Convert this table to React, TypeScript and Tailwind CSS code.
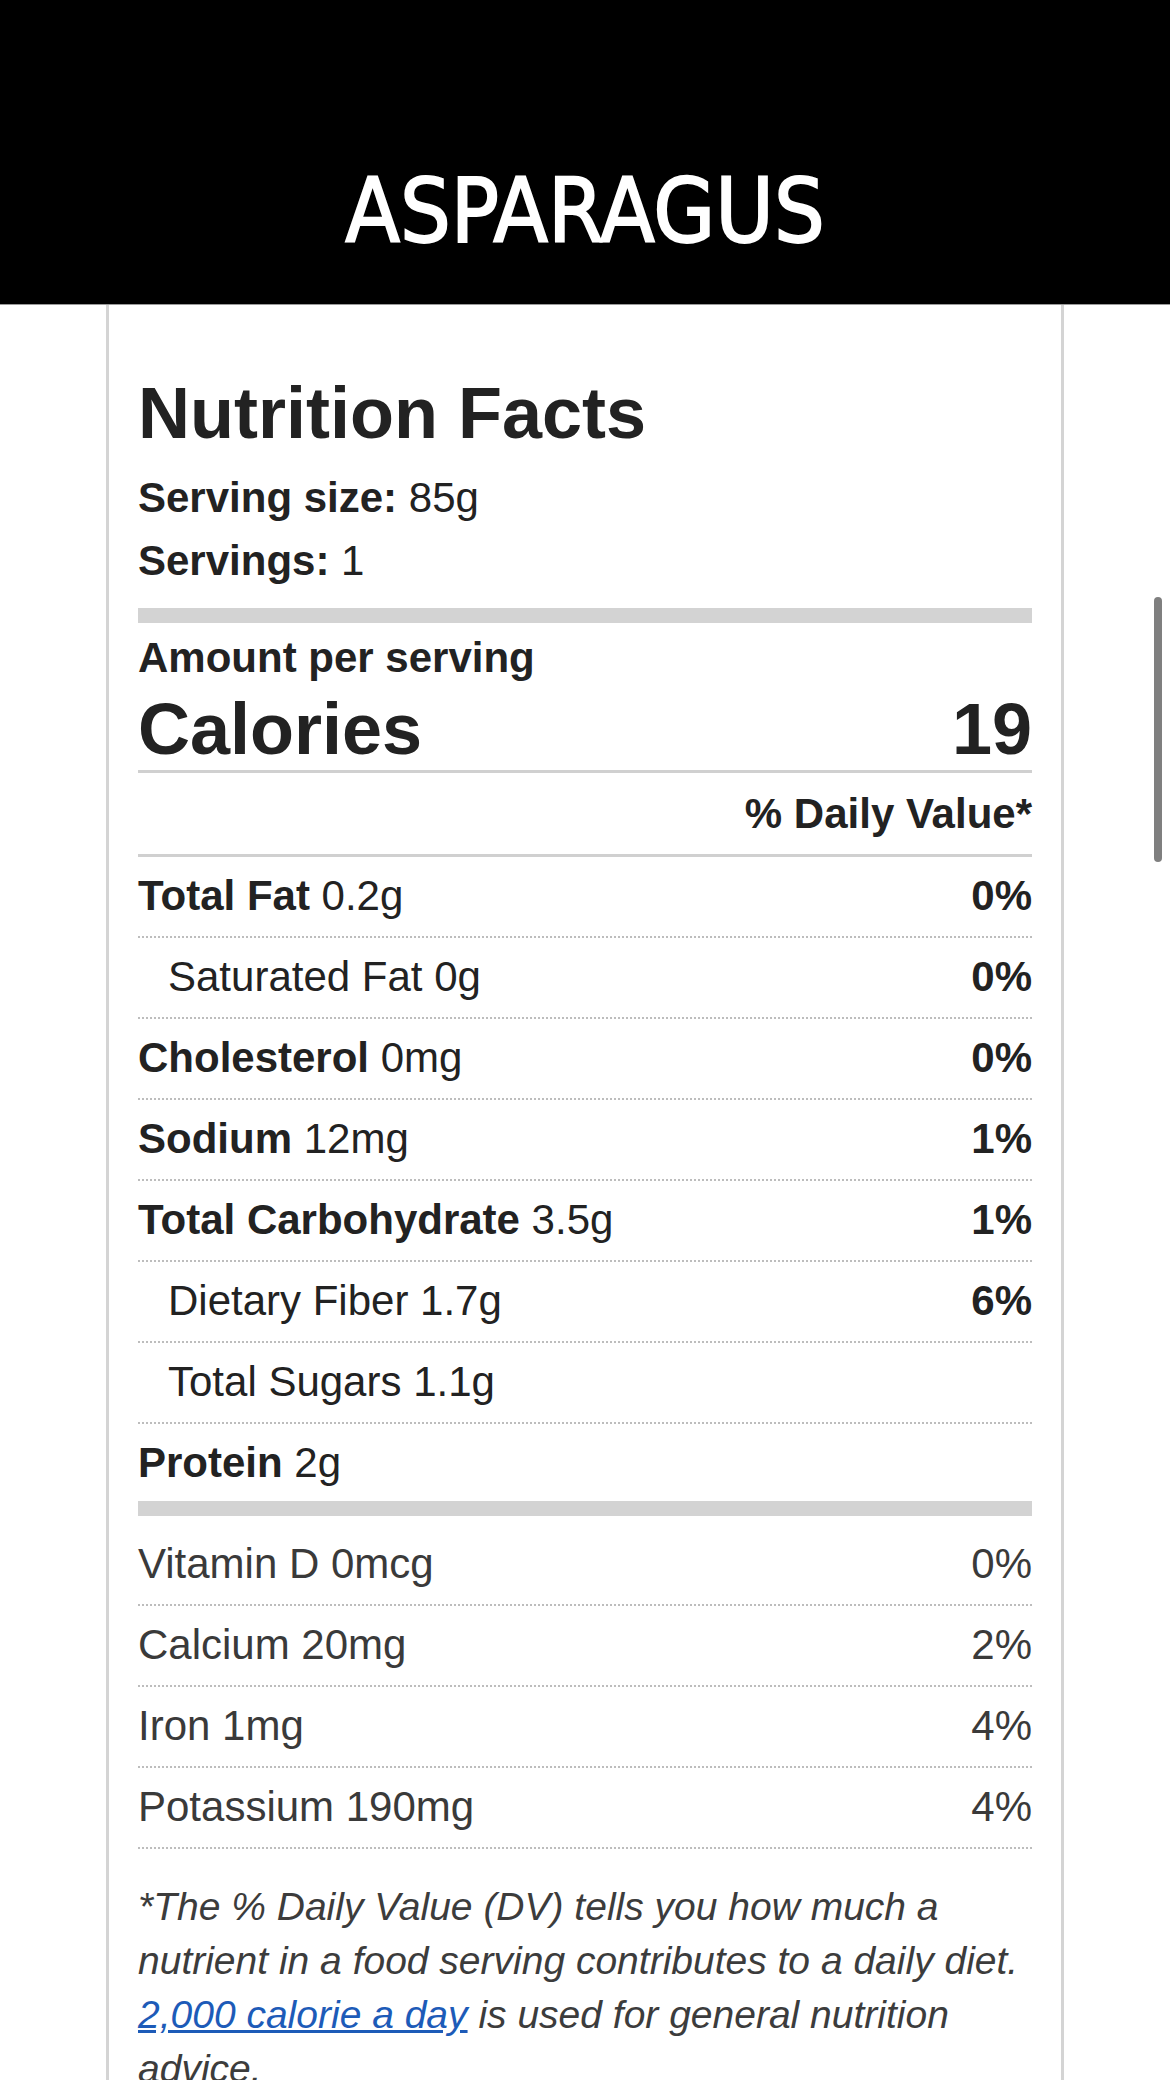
import React from "react";

type Row = { label: string; value: string; dv?: string; bold?: boolean; indent?: boolean; last?: boolean };

const rows: Row[] = [
  { label: "Total Fat", value: "0.2g", dv: "0%", bold: true },
  { label: "Saturated Fat", value: "0g", dv: "0%", indent: true },
  { label: "Cholesterol", value: "0mg", dv: "0%", bold: true },
  { label: "Sodium", value: "12mg", dv: "1%", bold: true },
  { label: "Total Carbohydrate", value: "3.5g", dv: "1%", bold: true },
  { label: "Dietary Fiber", value: "1.7g", dv: "6%", indent: true },
  { label: "Total Sugars", value: "1.1g", indent: true },
  { label: "Protein", value: "2g", bold: true, last: true },
];

const vitamins = [
  { label: "Vitamin D 0mcg", dv: "0%" },
  { label: "Calcium 20mg", dv: "2%" },
  { label: "Iron 1mg", dv: "4%" },
  { label: "Potassium 190mg", dv: "4%" },
];

export default function App() {
  return (
    <div
      className="relative w-[1170px] h-[2080px] overflow-hidden bg-white"
      style={{ fontFamily: '"Liberation Sans", Arial, sans-serif' }}
    >
      <header className="h-[305px] bg-black border-b border-[#9a9a9a] flex justify-center">
        <h1
          className="mt-[163px] text-white text-[89px] leading-[96px] font-normal tracking-[0px] [-webkit-text-stroke:1.8px_white]"
          style={{ fontFamily: '"DejaVu Sans Condensed", "DejaVu Sans", sans-serif', fontStretch: "condensed" }}
        >
          ASPARAGUS
        </h1>
      </header>

      <div className="mx-auto w-[958px] border-x-[3px] border-[#d4d4d4] px-[29px] pt-[72px] text-[#222]">
        <h2 className="text-[72px] leading-[72px] font-bold">Nutrition Facts</h2>
        <div className="mt-[17px] text-[42px] leading-[63px]">
          <span className="font-bold">Serving size:</span> 85g
        </div>
        <div className="text-[42px] leading-[63px]">
          <span className="font-bold">Servings:</span> 1
        </div>
        <div className="mt-[16px] h-[15px] bg-[#d3d3d3]" />
        <div className="pt-[3px] text-[42px] leading-[63px] font-bold">Amount per serving</div>
        <div className="flex justify-between text-[72px] leading-[81px] font-bold border-b-[3px] border-[#d0d0d0]">
          <span>Calories</span>
          <span>19</span>
        </div>
        <div className="pt-[9px] pb-[9px] text-right text-[42px] leading-[63px] font-bold border-b-[3px] border-[#d0d0d0]">
          % Daily Value*
        </div>

        {rows.map((r) => (
          <div
            key={r.label}
            className={
              r.last
                ? "flex justify-between pt-[7px] pb-[7px] text-[42px] leading-[63px]"
                : "flex justify-between pt-[7px] pb-[9px] text-[42px] leading-[63px] border-b-2 border-dotted border-[#bdbdbd]"
            }
          >
            <span className={r.indent ? "pl-[30px]" : ""}>
              {r.bold ? <span className="font-bold">{r.label}</span> : r.label} {r.value}
            </span>
            <span className="font-bold">{r.dv ?? ""}</span>
          </div>
        ))}

        <div className="h-[15px] bg-[#d3d3d3]" />

        {vitamins.map((v, i) => (
          <div
            key={v.label}
            className={
              i === 0
                ? "flex justify-between pt-[16px] pb-[9px] text-[42px] leading-[63px] text-[#3a3a3a] border-b-2 border-dotted border-[#bdbdbd]"
                : "flex justify-between pt-[7px] pb-[9px] text-[42px] leading-[63px] text-[#3a3a3a] border-b-2 border-dotted border-[#bdbdbd]"
            }
          >
            <span>{v.label}</span>
            <span>{v.dv}</span>
          </div>
        ))}

        <p className="mt-[31px] text-[39px] leading-[54px] italic text-[#3c3c3c]">
          *The % Daily Value (DV) tells you how much a nutrient in a food serving contributes to a daily diet.{" "}
          <a className="text-[#1d5bb8] underline">2,000 calorie a day</a> is used for general nutrition advice.
        </p>
      </div>

      <div className="absolute left-[1154px] top-[597px] w-[8px] h-[265px] rounded-full bg-[#7f7f7f]" />
    </div>
  );
}
